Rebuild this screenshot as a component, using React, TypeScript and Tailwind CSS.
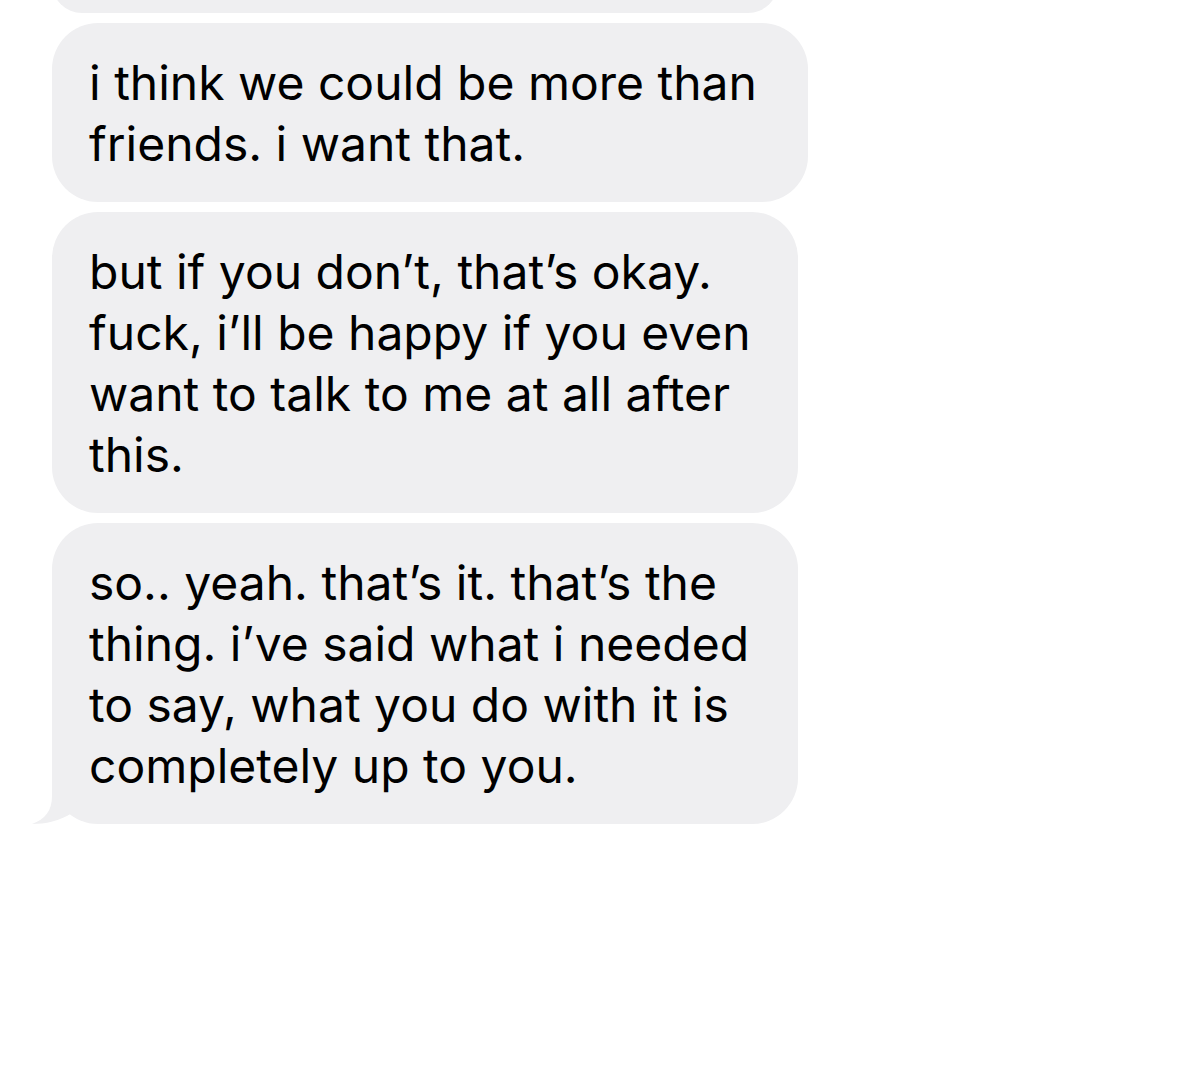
import React from "react";

const font = { fontFamily: "Inter, 'Liberation Sans', sans-serif" };

function Bubble({ lines, width, tail }: { lines: string[]; width: string; tail?: boolean }) {
  return (
    <div className={`relative ${width} rounded-[46px] bg-[#efeff1] pl-[37px] pt-[29px] pb-[28px]`}>
      <div className="text-[48px] leading-[61px] text-black whitespace-nowrap">
        {lines.map((l, i) => (
          <div key={i}>{l}</div>
        ))}
      </div>
      {tail && (
        <svg className="absolute left-[-20px] bottom-0" width="60" height="60" viewBox="0 0 60 60">
          <path d="M20 4 L20 32 C20 47 13 55 0 60 C13 60 28 57 40 49 L48 27 Z" fill="#efeff1" />
        </svg>
      )}
    </div>
  );
}

export default function App() {
  return (
    <div className="w-[1178px] h-[1087px] bg-white overflow-hidden" style={font}>
      <div className="flex flex-col gap-[10px] pl-[52px]">
        <div className="w-[726px] h-[60px] mt-[-47px] rounded-[46px] bg-[#efeff1]" />
        <Bubble width="w-[756px]" lines={["i think we could be more than", "friends. i want that."]} />
        <Bubble
          width="w-[746px]"
          lines={[
            "but if you don\u2019t, that\u2019s okay.",
            "fuck, i\u2019ll be happy if you even",
            "want to talk to me at all after",
            "this.",
          ]}
        />
        <Bubble
          width="w-[746px]"
          tail
          lines={[
            "so.. yeah. that\u2019s it. that\u2019s the",
            "thing. i\u2019ve said what i needed",
            "to say, what you do with it is",
            "completely up to you.",
          ]}
        />
      </div>
    </div>
  );
}
